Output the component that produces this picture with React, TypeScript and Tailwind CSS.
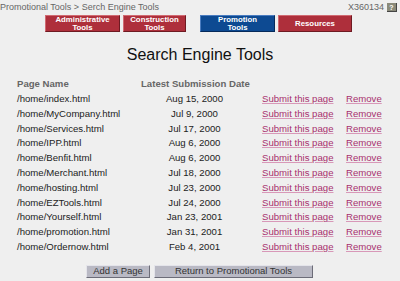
const PAGES: [string, string][] = [
  ["/home/index.html", "Aug 15, 2000"],
  ["/home/MyCompany.html", "Jul 9, 2000"],
  ["/home/Services.html", "Jul 17, 2000"],
  ["/home/IPP.html", "Aug 6, 2000"],
  ["/home/Benfit.html", "Aug 6, 2000"],
  ["/home/Merchant.html", "Jul 18, 2000"],
  ["/home/hosting.html", "Jul 23, 2000"],
  ["/home/EZTools.html", "Jul 24, 2000"],
  ["/home/Yourself.html", "Jan 23, 2001"],
  ["/home/promotion.html", "Jan 31, 2001"],
  ["/home/Ordernow.html", "Feb 4, 2001"],
];

function Tab({
  label,
  active,
  className,
}: {
  label: string[];
  active?: boolean;
  className: string;
}) {
  return (
    <div
      className={`h-[17px] flex flex-col items-center justify-center text-white font-bold text-[7.8px] leading-[7.5px] border ${
        active
          ? "bg-[#0d4a92] border-t-[#4a7cc0] border-l-[#4a7cc0] border-b-[#062a5a] border-r-[#062a5a]"
          : "bg-[#ae2f3b] border-t-[#d06a72] border-l-[#d06a72] border-b-[#6e1a22] border-r-[#6e1a22]"
      } ${className}`}
    >
      {label.map((l) => (
        <span key={l}>{l}</span>
      ))}
    </div>
  );
}

function GrayButton({ children, className }: { children: string; className: string }) {
  return (
    <div
      className={`h-[13px] flex items-center justify-center bg-[#b9b9c4] text-[#333] text-[9.5px] border border-t-[#e4e4ea] border-l-[#e4e4ea] border-b-[#6c6c78] border-r-[#6c6c78] ${className}`}
    >
      {children}
    </div>
  );
}

export default function App() {
  return (
    <div
      className="w-[400px] h-[281px] bg-[#efefef] overflow-hidden"
      style={{ fontFamily: '"Liberation Sans", Arial, sans-serif' }}
    >
      <div className="flex justify-between items-center h-[15px] text-[9px] text-[#666] pr-[3px]">
        <span>Promotional Tools &gt; Serch Engine Tools</span>
        <span className="flex items-center gap-[3px]">
          X360134
          <span className="w-[10px] h-[9px] bg-[#8a8a7a] text-white text-[7px] font-bold leading-[9px] text-center border-b border-r border-[#444]">
            ?
          </span>
        </span>
      </div>

      <div className="flex pl-[45px]">
        <Tab label={["Administrative", "Tools"]} className="w-[75px]" />
        <Tab label={["Construction", "Tools"]} className="w-[63px] ml-[3px]" />
        <Tab label={["Promotion", "Tools"]} active className="w-[75px] ml-[14px]" />
        <Tab label={["Resources"]} className="w-[74px] ml-[3px]" />
      </div>

      <h1 className="mt-[13px] text-center text-[16px] leading-[20px] text-[#111]">
        Search Engine Tools
      </h1>

      <div className="mt-[12px] pl-[17px] grid grid-cols-[124px_107px_98px_1fr] text-[9.6px] auto-rows-[14.8px] items-center">
        <span className="font-bold text-[#666]">Page Name</span>
        <span className="font-bold text-[#666] text-center whitespace-nowrap">
          Latest Submission Date
        </span>
        <span />
        <span />
        {PAGES.map(([page, date]) => (
          <div key={page} className="contents">
            <span className="text-[#222]">{page}</span>
            <span className="text-[#222] text-center">{date}</span>
            <span className="pl-[14px] text-[#a8306e] underline decoration-[#d898b8]">
              Submit this page
            </span>
            <span className="text-[#a8306e] underline decoration-[#d898b8]">Remove</span>
          </div>
        ))}
      </div>

      <div className="mt-[10px] flex justify-center gap-[4px] pr-[1px]">
        <GrayButton className="w-[64px]">Add a Page</GrayButton>
        <GrayButton className="w-[159px]">Return to Promotional Tools</GrayButton>
      </div>
    </div>
  );
}
